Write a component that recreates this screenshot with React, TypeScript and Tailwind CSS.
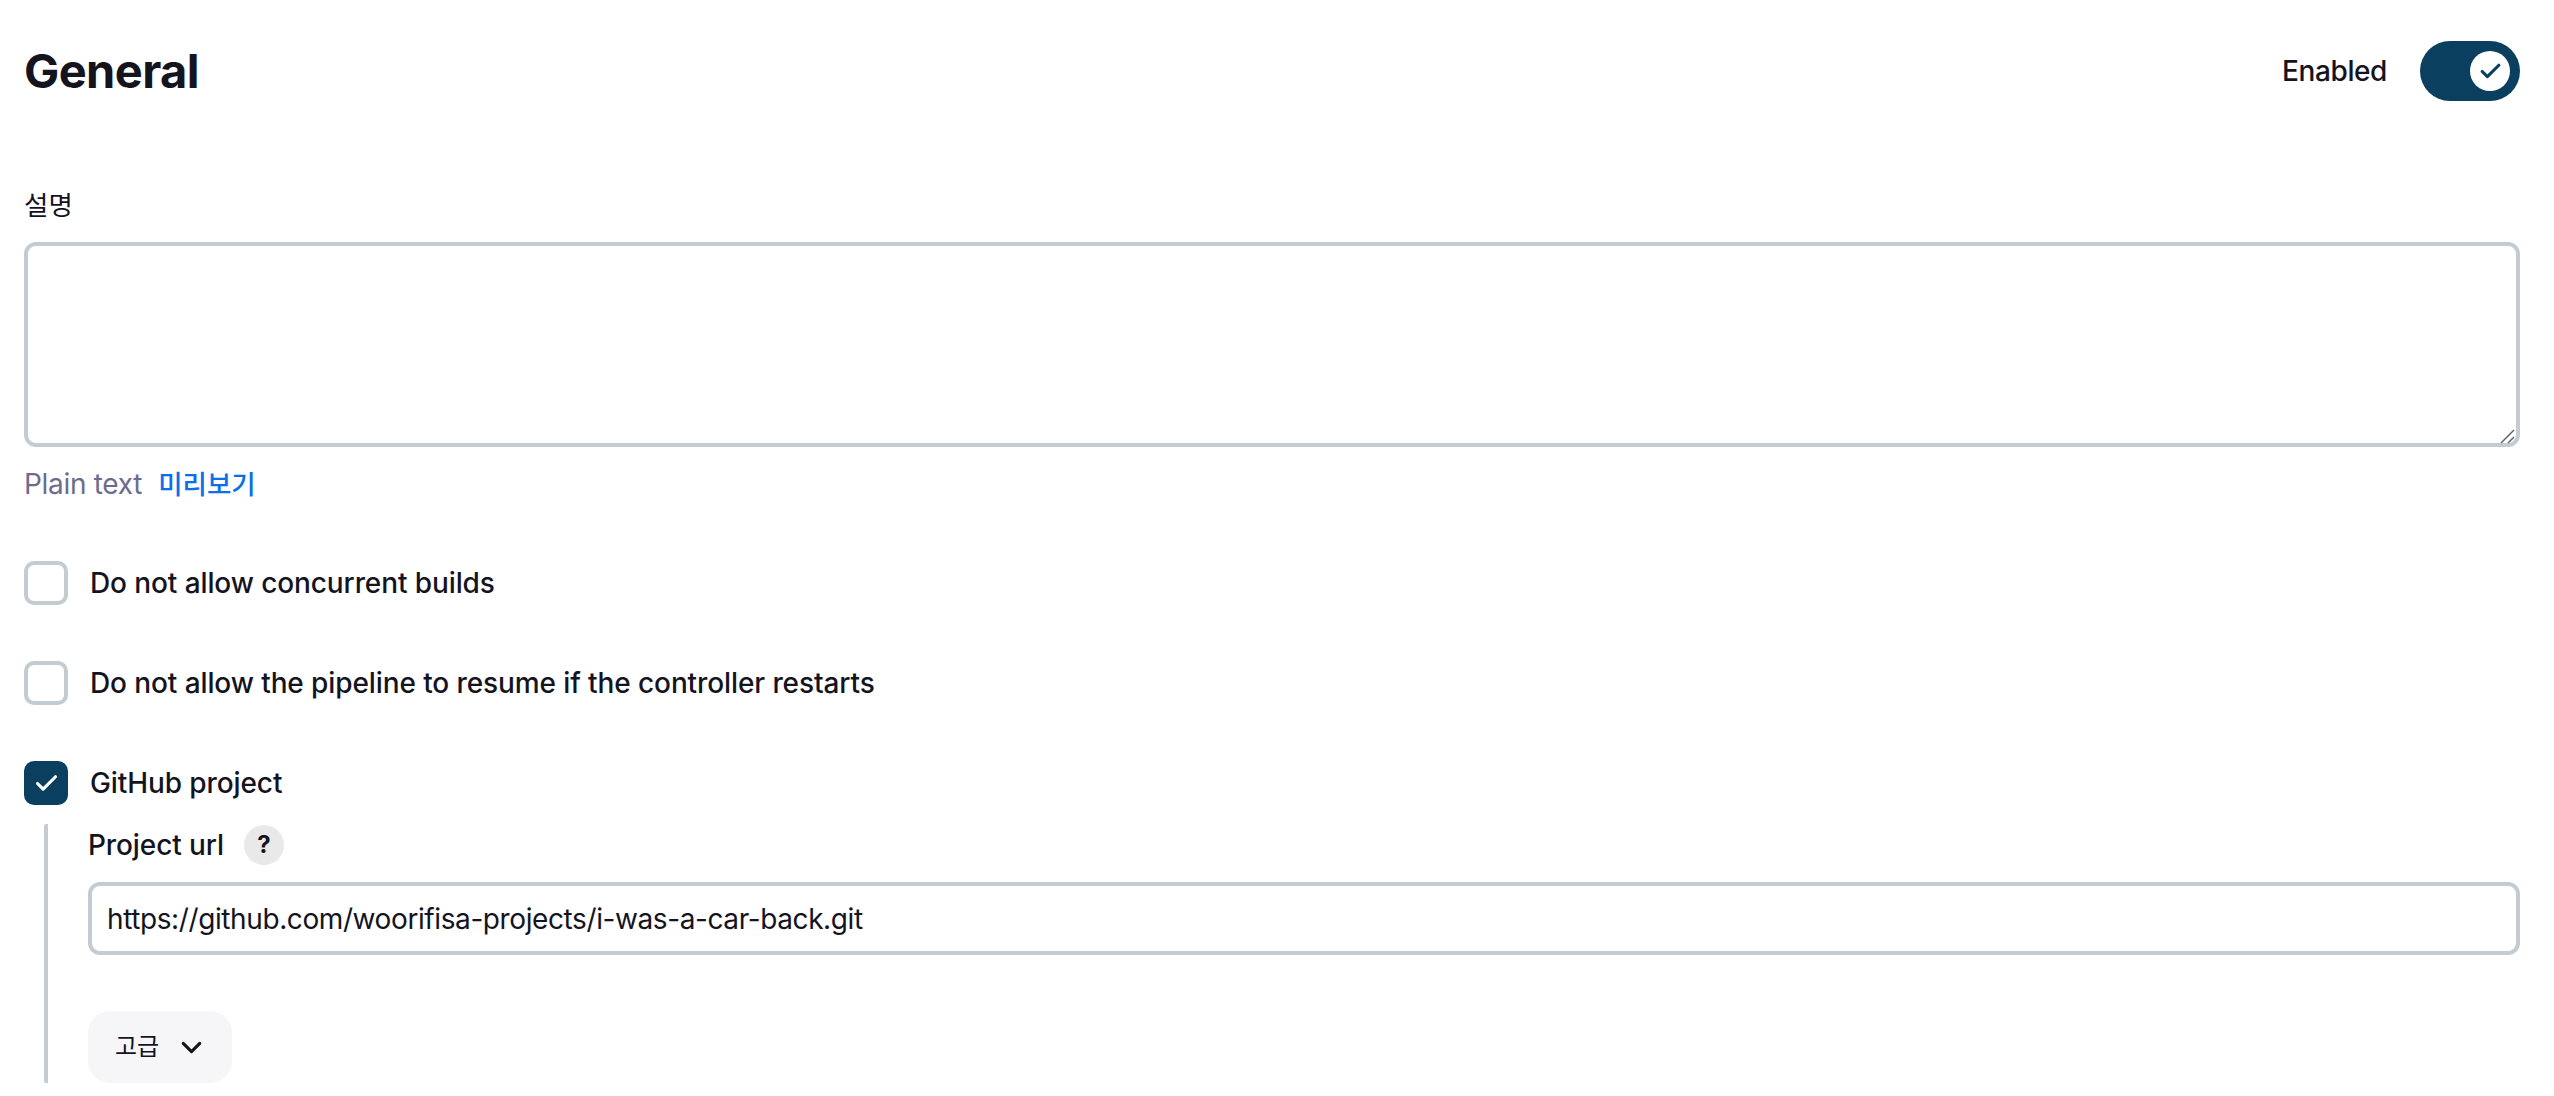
import React from 'react';
import { Check, ChevronDown } from 'lucide-react';

const fontStack = "font-['Inter','Noto_Sans_CJK_KR',sans-serif]";

const CheckRow = ({ label, checked = false, className = '' }: { label: string; checked?: boolean; className?: string }) => (
  <div className={`flex items-center h-[44px] ${className}`}>
    {checked ? (
      <div className="w-[44px] h-[44px] rounded-[10px] bg-[#0b3f60] flex items-center justify-center">
        <Check className="w-[27px] h-[27px] text-white" strokeWidth={2.8} />
      </div>
    ) : (
      <div className="w-[44px] h-[44px] rounded-[10px] border-[4px] border-[#c3ccd1] bg-white" />
    )}
    <span className="ml-[22px] text-[28px] font-[450] tracking-[-0.1px] leading-[44px] text-[#14141f]">{label}</span>
  </div>
);

const App = () => {
  return (
    <div className={`${fontStack} w-[2554px] h-[1096px] overflow-hidden bg-white pl-[24px] pr-[34px] text-[#14141f]`}>
      <div className="flex items-center justify-between h-[142px]">
        <h1 className="text-[47px] font-bold tracking-[-0.6px] leading-none -translate-y-px">General</h1>
        <div className="flex items-center">
          <span className="text-[28px] font-[450] tracking-[-0.4px]">Enabled</span>
          <div className="ml-[33px] w-[100px] h-[60px] rounded-full bg-[#0b3f60] flex items-center justify-end pr-[10px]">
            <div className="w-[40px] h-[40px] rounded-full bg-white flex items-center justify-center">
              <Check className="w-[25px] h-[25px] text-[#0b3f60]" strokeWidth={3} />
            </div>
          </div>
        </div>
      </div>

      <div className="mt-[49px] text-[26.5px] leading-[28px]">설명</div>
      <div className="relative mt-[23px]">
        <textarea
          readOnly
          className="block w-full h-[205px] rounded-[12px] border-[4px] border-[#c3ccd1] bg-white outline-none resize-none"
        />
        <svg className="absolute right-[3px] bottom-[3px] w-[18px] h-[18px]" viewBox="0 0 18 18" fill="none" stroke="#666" strokeWidth="1.5">
          <path d="M2 17L15 4M9 17L15 11" />
        </svg>
      </div>
      <div className="flex items-center mt-[20px] text-[28px] leading-[34px]">
        <span className="text-[#6d6b8d] tracking-[-0.3px]">Plain text</span>
        <a className="ml-[16px] text-[26.5px] font-medium text-[#0b6fe8]">미리보기</a>
      </div>

      <CheckRow label="Do not allow concurrent builds" className="mt-[60px]" />
      <CheckRow label="Do not allow the pipeline to resume if the controller restarts" className="mt-[56px]" />
      <CheckRow label="GitHub project" checked className="mt-[56px]" />

      <div className="mt-[19px] ml-[20px] pl-[40px] border-l-[4px] border-[#c3ccd1] rounded-[2px] h-[259px]">
        <div className="flex items-center h-[42px]">
          <span className="text-[28px] font-[450] tracking-[-0.1px]">Project url</span>
          <span className="ml-[20px] w-[40px] h-[40px] rounded-full bg-[#e9e9ea] flex items-center justify-center text-[24px] font-bold">?</span>
        </div>
        <input
          readOnly
          value="https://github.com/woorifisa-projects/i-was-a-car-back.git"
          className="block mt-[16px] w-full h-[73px] px-[15px] rounded-[12px] border-[4px] border-[#c3ccd1] bg-white text-[28px] tracking-[-0.4px] text-[#14141f] outline-none"
        />
        <button className="mt-[56px] flex items-center w-[144px] h-[72px] pl-[27px] rounded-[22px] bg-[#f6f6f8] text-[24px]">
          고급
          <ChevronDown className="ml-[16px] w-[33px] h-[33px]" strokeWidth={2.2} />
        </button>
      </div>
    </div>
  );
};

export default App;
